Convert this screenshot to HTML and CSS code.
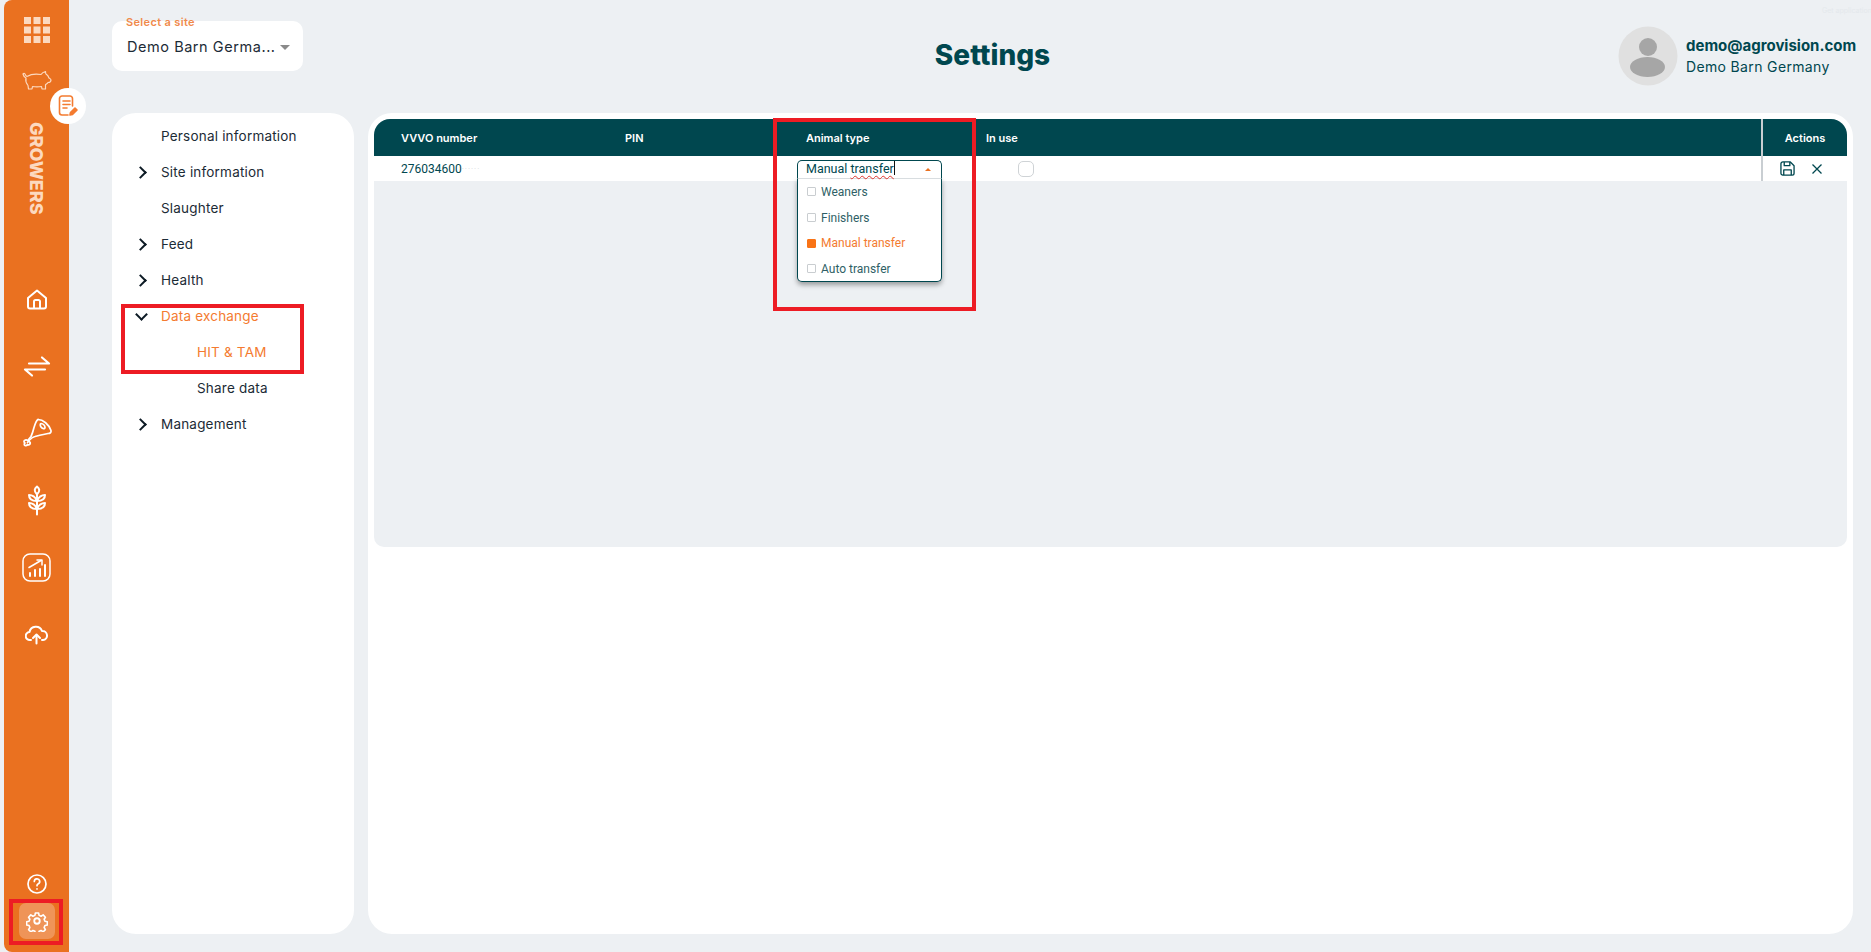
FILE: index.html
```html
<!DOCTYPE html>
<html lang="en">
<head>
    <meta charset="UTF-8">
    <title>Settings</title>
    <link rel="stylesheet" href="styles.css">
</head>
<body>
    <aside class="sidebar">
        <svg class="nav-grid" width="26" height="26" viewBox="0 0 26 26" fill="#fcd9bf">
            <rect x="0" y="0" width="7" height="7"/><rect x="9.5" y="0" width="7" height="7"/><rect x="19" y="0" width="7" height="7"/>
            <rect x="0" y="9.5" width="7" height="7"/><rect x="9.5" y="9.5" width="7" height="7"/><rect x="19" y="9.5" width="7" height="7"/>
            <rect x="0" y="19" width="7" height="7"/><rect x="9.5" y="19" width="7" height="7"/><rect x="19" y="19" width="7" height="7"/>
        </svg>
        <svg class="nav-pig" width="30" height="20" viewBox="0 0 30 20" fill="none" stroke="#fcd9bf" stroke-width="1.2" stroke-linejoin="round" stroke-linecap="round">
            <path d="M1 4c1-1 2-.5 2.500 1 .5 1 1 1.500 2 1.200C9 4 15 4 19 4.500c1-1.500 2.500-2.500 4.500-3 0 1 0 2 .5 2.500 1.500 1 2.500 2.500 3 4 1 .5 2 1 2 2 0 1.500-1 2.500-3 2.500-.5 1-1.500 1.500-2.500 2.200V19h-3.500l-.5-2.500c-3 .5-6 .5-9 0L10 19H6.500l-.5-3.500C4 13 3.500 10 4 8 2.500 7.500 1.500 6 1 4z"/>
        </svg>
        <div class="brand">GROWERS</div>
        <nav class="nav-main">
            <svg width="22" height="22" viewBox="0 0 22 22" fill="none" stroke="#fff" stroke-width="2" stroke-linejoin="round">
                <path d="M2 9.500 11 2l9 7.500V18a2 2 0 0 1-2 2H4a2 2 0 0 1-2-2z"/><path d="M8 20v-7a1.500 1.500 0 0 1 1.500-1.500h3A1.500 1.500 0 0 1 14 13v7"/>
            </svg>
            <svg width="28" height="22" viewBox="0 0 28 22" fill="none" stroke="#fff" stroke-width="2.200" stroke-linecap="round" stroke-linejoin="round">
                <path d="M19 2l7 6H6"/><path d="M9 20l-7-6h20"/>
            </svg>
            <svg width="32" height="32" viewBox="0 0 32 32" fill="none" stroke="#fff" stroke-width="1.700" stroke-linecap="round" stroke-linejoin="round">
                <path d="M17 2c5 0 11 5 13 11 .5 2-1 3-3 3-5 1-10 2-13 3-2 .5-3.500 1.500-5.500 3.500l-2 2.500"/><path d="M17 2c-2 1-3 5-4 8-1 4-2 7-3 9l-2.500 3"/><path d="M20 6c2 0 4 2 4 4s-3 1-4-.5-1-3.500 0-3.500z"/>
                <path d="M7 23c-2-1-4-.500-4 1 0 .8.5 1.200 1 1.500-1 .5-1 2 0 2.500s2 0 2.500-1c.5 .5 2 .5 2.500-.5s0-2-1-2.500z"/>
            </svg>
            <svg width="20" height="30" viewBox="0 0 20 30" fill="none" stroke="#fff" stroke-width="2" stroke-linecap="round" stroke-linejoin="round">
                <path d="M10 29V8"/><path d="M10 1C7.500 3 6.500 5.500 10 9c3.500-3.500 2.500-6 0-8z"/>
                <path d="M10 15C8 11 5 9.500 2 9.500c0 4 3 6 8 6 5 0 8-2 8-6-3 0-6 1.500-8 5.500z"/>
                <path d="M10 23c-2-4-5-5.500-8-5.500 0 4 3 6 8 6 5 0 8-2 8-6-3 0-6 1.500-8 5.500z"/>
            </svg>
            <svg width="29" height="29" viewBox="0 0 29 29" fill="none" stroke="#fff" stroke-width="1.500" stroke-linecap="round" stroke-linejoin="round">
                <rect x="1" y="1" width="27" height="27" rx="7"/><path d="M7 14.500 19 7.500"/><path d="M15 7h5v5"/>
                <path d="M8 23v-3" stroke-width="2"/><path d="M13 23v-6" stroke-width="2"/><path d="M18 23v-7" stroke-width="2"/><path d="M23 23v-11" stroke-width="2"/>
            </svg>
            <svg width="23" height="20" viewBox="0 0 23 20" fill="none" stroke="#fff" stroke-width="2" stroke-linecap="round" stroke-linejoin="round">
                <path d="M6 15.500H5A4 4 0 0 1 4.500 7.500 6.500 6.500 0 0 1 17 6.500a4.500 4.500 0 0 1 1 9h-1"/><path d="M11.500 19v-8"/><path d="M8 13.500 11.500 10l3.500 3.500"/>
            </svg>
        </nav>
        <div class="nav-bottom">
            <svg width="20" height="20" viewBox="0 0 20 20" fill="none" stroke="#fff" stroke-width="1.700" stroke-linecap="round">
                <circle cx="10" cy="10" r="9"/><path d="M7.300 7.500A2.700 2.700 0 1 1 11 10c-.7.400-1 .8-1 1.700"/><path d="M10 14.800v.1"/>
            </svg>
            <div class="gear-box">
                <svg width="22" height="22" viewBox="0 0 24 24" fill="none" stroke="#fff" stroke-width="2" stroke-linejoin="round">
                    <circle cx="12" cy="12" r="3"/>
                    <path d="M10 2h4l.6 3 2.500 1.100 2.600-1.700 2.800 2.900-1.600 2.500 1 2.600 3 .6v4l-3 .6-1 2.500 1.600 2.600-2.800 2.800-2.600-1.600-2.500 1-.6 3h-4l-.6-3-2.500-1-2.600 1.600-2.800-2.800 1.600-2.600-1-2.500-3-.6v-4l3-.6 1-2.600L1.500 7.300l2.800-2.900 2.600 1.700L9.400 5z" transform="translate(1.500 1.500) scale(.875)"/>
                </svg>
            </div>
        </div>
    </aside>

    <div class="note-badge">
        <svg width="20" height="22" viewBox="0 0 20 22" fill="none" stroke="#f47b30" stroke-width="1.600" stroke-linecap="round" stroke-linejoin="round">
            <path d="M10 20H4a2.500 2.500 0 0 1-2.500-2.500v-14A2.500 2.500 0 0 1 4 1h8a2.500 2.500 0 0 1 2.500 2.500V11"/>
            <path d="M5 6h7M5 9.500h7M5 13h4"/>
            <path d="M12 20l.5-2.500 4.500-4.500 2 2-4.500 4.500z" fill="#f47b30"/>
        </svg>
    </div>

    <div class="content">
        <header class="topbar">
            <div class="site-select">
                <span class="site-label">Select a site</span>
                <span class="site-name">Demo Barn Germa...</span>
                <span class="site-arrow"></span>
            </div>
            <h1 class="page-title">Settings</h1>
            <div class="user">
                <svg class="avatar" width="60" height="60" viewBox="0 0 60 60">
                    <circle cx="30" cy="30" r="29.500" fill="#e0e0e0"/>
                    <circle cx="30" cy="21" r="9" fill="#a6a6a6"/>
                    <ellipse cx="29.500" cy="41" rx="17.500" ry="10" fill="#a6a6a6"/>
                </svg>
                <div class="user-text">
                    <div class="user-mail">demo@agrovision.com</div>
                    <div class="user-site">Demo Barn Germany</div>
                </div>
            </div>
            <span class="get-app">Get application</span>
        </header>

        <main class="panels">
            <ul class="menu">
                <li class="menu-item">Personal information</li>
                <li class="menu-item has-arrow">Site information</li>
                <li class="menu-item">Slaughter</li>
                <li class="menu-item has-arrow">Feed</li>
                <li class="menu-item has-arrow">Health</li>
                <li class="menu-item has-arrow open active">Data exchange</li>
                <li class="menu-item sub active">HIT &amp; TAM</li>
                <li class="menu-item sub">Share data</li>
                <li class="menu-item has-arrow">Management</li>
            </ul>

            <section class="panel">
                <div class="grid-table">
                    <div class="row head">
                        <div class="cell">VVVO number</div>
                        <div class="cell">PIN</div>
                        <div class="cell">Animal type</div>
                        <div class="cell">In use</div>
                        <div class="cell actions">Actions</div>
                    </div>
                    <div class="row body-row">
                        <div class="cell vvvo">276034600<span class="masked">······</span></div>
                        <div class="cell"></div>
                        <div class="cell"></div>
                        <div class="cell"><span class="use-check"></span></div>
                        <div class="cell actions">
                            <svg width="15" height="15" viewBox="0 0 16 16" fill="none" stroke="#00474f" stroke-width="1.400" stroke-linejoin="round">
                                <path d="M1 3a2 2 0 0 1 2-2h8l4 4v8a2 2 0 0 1-2 2H3a2 2 0 0 1-2-2z"/><path d="M4.500 1v4h6V1"/><path d="M4 15V9.500h8V15"/>
                            </svg>
                            <svg width="12" height="12" viewBox="0 0 12 12" fill="none" stroke="#00474f" stroke-width="1.300">
                                <path d="M1.500 1.500l9 9M10.500 1.500l-9 9"/>
                            </svg>
                        </div>
                    </div>
                    <div class="table-rest"></div>

                    <div class="dropdown">
                        <div class="dd-input">
                            <span>Manual <span class="spell">transfer</span></span><span class="dd-caret"></span>
                            <span class="dd-arrow"></span>
                        </div>
                        <ul class="dd-list">
                            <li class="dd-option"><span class="dd-box"></span>Weaners</li>
                            <li class="dd-option"><span class="dd-box"></span>Finishers</li>
                            <li class="dd-option selected"><span class="dd-box"></span>Manual transfer</li>
                            <li class="dd-option"><span class="dd-box"></span>Auto transfer</li>
                        </ul>
                    </div>
                </div>
            </section>
        </main>
    </div>

    <div class="mark mark-gear"></div>
    <div class="mark mark-menu"></div>
    <div class="mark mark-type"></div>
</body>
</html>
```

FILE: styles.css
```css
* {
    box-sizing: border-box;
}
html, body {
    height: 100%;
    margin: 0;
    overflow: hidden;
}
body {
    display: flex;
    padding-left: 4px;
    background: #edf0f3;
    font-family: "Inter", "Liberation Sans", sans-serif;
    color: #1c2b36;
}

/* left bar */
.sidebar {
    width: 65px;
    flex: none;
    display: flex;
    flex-direction: column;
    align-items: center;
    padding-top: 17px;
    padding-bottom: 13px;
    background: #ea7120;
    border-radius: 8px 0 0 8px;
}
.nav-grid {
    margin-left: 0;
}
.nav-pig {
    margin-top: 27px;
}
.brand {
    margin-top: 24px;
    writing-mode: vertical-rl;
    font-size: 18px;
    font-weight: 800;
    color: #fcd9bf;
    height: 108px;
    text-align: center;
}
.nav-main {
    display: flex;
    flex-direction: column;
    align-items: center;
    margin-top: 44px;
    gap: 0;
}
.nav-main svg {
    display: block;
    height: 67px;
    padding: 0;
}
.nav-bottom {
    margin-top: auto;
    display: flex;
    flex-direction: column;
    align-items: center;
    gap: 9px;
}
.gear-box {
    width: 36px;
    height: 36px;
    border-radius: 7px;
    background: rgba(255, 255, 255, .25);
    display: flex;
    align-items: center;
    justify-content: center;
}
.note-badge {
    position: absolute;
    left: 50px;
    top: 88px;
    width: 36px;
    height: 36px;
    border-radius: 50%;
    background: #fff;
    display: flex;
    align-items: center;
    justify-content: center;
}

/* main area */
.content {
    flex: 1;
    min-width: 0;
    display: flex;
    flex-direction: column;
    padding: 0 18px 18px 43px;
}
.topbar {
    height: 113px;
    flex: none;
    display: flex;
    align-items: flex-start;
    padding-top: 21px;
    position: relative;
}
.site-select {
    position: relative;
    width: 191px;
    height: 50px;
    background: #fff;
    border-radius: 10px;
    display: flex;
    align-items: center;
    padding-left: 15px;
}
.site-label {
    position: absolute;
    left: 14px;
    top: -6px;
    font-size: 11px;
    font-weight: 600;
    letter-spacing: .35px;
    color: #f08a4b;
}
.site-name {
    font-size: 14.500px;
    letter-spacing: .55px;
    white-space: nowrap;
}
.site-arrow {
    position: absolute;
    left: 168px;
    top: 24px;
    border-left: 5px solid transparent;
    border-right: 5px solid transparent;
    border-top: 5px solid #8a8a8a;
}
.page-title {
    flex: 1;
    margin: 0;
    padding: 14px 0 0 64px;
    text-align: center;
    font-size: 28px;
    font-weight: 800;
    line-height: 40px;
    color: #00474f;
}
.user {
    width: 235px;
    display: flex;
    align-items: center;
    gap: 8px;
    margin-top: 5px;
}
.avatar {
    flex: none;
}
.user-mail {
    font-size: 15px;
    font-weight: 700;
    line-height: 21px;
    color: #00474f;
    white-space: nowrap;
}
.user-site {
    font-size: 14px;
    letter-spacing: .35px;
    line-height: 21px;
    color: #00474f;
    white-space: nowrap;
}
.get-app {
    position: absolute;
    left: 1710px;
    top: 6px;
    font-size: 7px;
    color: #e4e8ec;
    white-space: nowrap;
}
.panels {
    flex: 1;
    display: flex;
    gap: 14px;
    min-height: 0;
}

/* settings menu */
.menu {
    width: 242px;
    flex: none;
    margin: 0;
    padding: 5px 0 0;
    list-style: none;
    background: #fff;
    border-radius: 24px;
}
.menu-item {
    position: relative;
    height: 36px;
    line-height: 36px;
    padding-left: 49px;
    font-size: 13.500px;
    letter-spacing: .2px;
}
.menu-item.sub {
    padding-left: 85px;
}
.menu-item.active {
    color: #f47b30;
}
.menu-item.has-arrow::before {
    content: "";
    position: absolute;
    left: 24px;
    top: 14px;
    width: 7px;
    height: 7px;
    border-top: 2px solid #0c1a24;
    border-right: 2px solid #0c1a24;
    transform: rotate(45deg);
}
.menu-item.open::before {
    left: 25px;
    top: 12px;
    transform: rotate(135deg);
}

/* table */
.panel {
    flex: 1;
    min-width: 0;
    padding: 6px;
    background: #fff;
    border-radius: 24px;
}
.grid-table {
    position: relative;
}
.row {
    display: grid;
    grid-template-columns: 251px 181px 180px 1fr 86px;
}
.row.head {
    height: 37px;
    background: #00474f;
    border-radius: 16px 16px 0 0;
    color: #fff;
    font-size: 11px;
    font-weight: 600;
}
.row.body-row {
    height: 25px;
    font-family: "Roboto", sans-serif;
    font-size: 12px;
    color: #00474f;
}
.cell {
    display: flex;
    align-items: center;
}
.row .cell:first-child {
    padding-left: 27px;
}
.actions {
    justify-content: center;
    border-left: 2px solid #c9ced2;
}
.row.body-row .actions {
    gap: 16px;
    justify-content: flex-start;
    padding-left: 17px;
}
.masked {
    font-size: 8px;
    letter-spacing: 1px;
    color: #d4d8db;
}
.row .cell:nth-child(2),
.row .cell:nth-child(3),
.row .cell:nth-child(4) {
    padding-left: 0;
}
.use-check {
    width: 16px;
    height: 16px;
    margin-left: 32px;
    border: 1px solid #cfd3d6;
    border-radius: 5px;
    background: #fff;
}
.table-rest {
    height: 366px;
    background: #edf0f3;
    border-radius: 0 0 10px 10px;
}

/* animal type dropdown */
.dropdown {
    position: absolute;
    left: 423px;
    top: 41px;
    width: 145px;
    font-family: "Roboto", sans-serif;
}
.dd-input {
    position: relative;
    height: 18px;
    padding-left: 8px;
    background: #fff;
    border: 1px solid #00474f;
    border-bottom: none;
    border-radius: 5px 5px 0 0;
    font-size: 12.500px;
    line-height: 16px;
    color: #00474f;
}
.spell {
    text-decoration: underline wavy #e0342c 1px;
    text-underline-offset: 2px;
}
.dd-caret {
    display: inline-block;
    width: 1px;
    height: 14px;
    margin-left: 0;
    background: #111;
    vertical-align: -2px;
}
.dd-arrow {
    position: absolute;
    right: 10px;
    top: 7px;
    border-left: 3.500px solid transparent;
    border-right: 3.500px solid transparent;
    border-bottom: 3.500px solid #ea7120;
}
.dd-list {
    margin: 0;
    padding: 0;
    list-style: none;
    height: 104px;
    background: #fff;
    border: 1px solid #00474f;
    border-top: 1px solid #d8dde0;
    border-radius: 0 0 5px 5px;
    box-shadow: 0 3px 5px rgba(0, 0, 0, .35);
    padding-top: 0;
}
.dd-option {
    height: 25.700px;
    display: flex;
    align-items: center;
    gap: 5px;
    padding-left: 9px;
    font-size: 12px;
    color: #2f5f66;
}
.dd-box {
    width: 9px;
    height: 9px;
    border: 1px solid #c9cdd0;
    border-radius: 1px;
    background: #fff;
}
.dd-option.selected {
    color: #f47b30;
}
.dd-option.selected .dd-box {
    background: #f97316;
    border-color: #f97316;
}

/* red boxes drawn over the screenshot */
.mark {
    position: absolute;
    border: 4px solid #ed1c24;
    pointer-events: none;
}
.mark-gear {
    left: 9px;
    top: 899px;
    width: 54px;
    height: 46px;
}
.mark-menu {
    left: 121px;
    top: 304px;
    width: 183px;
    height: 70px;
}
.mark-type {
    left: 773px;
    top: 118px;
    width: 203px;
    height: 193px;
}
```
